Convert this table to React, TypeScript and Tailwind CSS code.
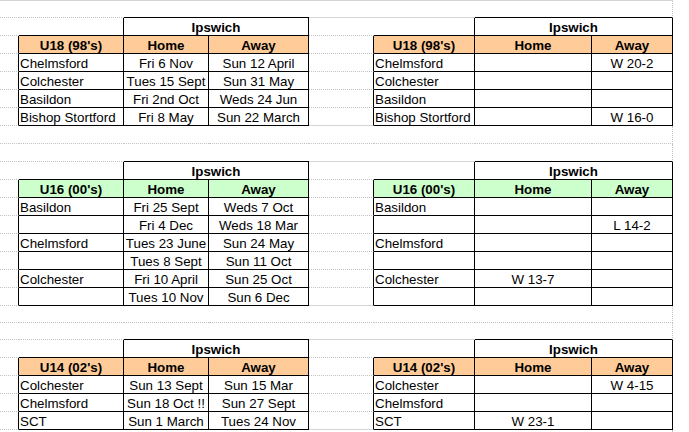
import React from 'react';

type Edge = 'dot' | 'gray' | 'black' | 'none';

type Cell = {
  w: string;
  b: Edge;
  r: Edge;
  t?: string;
  bg?: string;
  bold?: boolean;
  center?: boolean;
};

type Row = { h: string; cells: Cell[] };

const bottomCls: Record<Edge, string> = {
  dot: 'border-b border-b-[#c2c2c2] [border-bottom-style:dotted]!',
  gray: 'border-b border-b-[#d4d4d4]',
  black: 'border-b border-b-black',
  none: '',
};

const rightCls: Record<Edge, string> = {
  dot: 'border-r border-r-[#c2c2c2] [border-right-style:dotted]!',
  gray: 'border-r border-r-[#d4d4d4]',
  black: 'border-r border-r-black',
  none: '',
};

const A = 'w-[19px]';
const B = 'w-[105px]';
const C = 'w-[85px]';
const D = 'w-[100px]';
const E = 'w-[65px]';
const F = 'w-[101px]';
const G = 'w-[117px]';
const H = 'w-[81px]';

const blankRow = (h: string): Row => ({
  h,
  cells: [A, B, C, D, E, F, G].map((w) => ({ w, b: 'dot' as Edge, r: 'none' as Edge })).concat([{ w: H, b: 'dot', r: 'dot' }]),
});

const preRow = (h: string): Row => ({
  h,
  cells: [
    { w: A, b: 'dot', r: 'none' },
    { w: B, b: 'dot', r: 'none' },
    { w: C, b: 'black', r: 'none' },
    { w: D, b: 'black', r: 'none' },
    { w: E, b: 'gray', r: 'none' },
    { w: F, b: 'gray', r: 'none' },
    { w: G, b: 'black', r: 'none' },
    { w: H, b: 'black', r: 'dot' },
  ],
});

const titleRow = (): Row => ({
  h: 'h-[18px]',
  cells: [
    { w: A, b: 'dot', r: 'none' },
    { w: B, b: 'black', r: 'black' },
    { w: 'w-[185px]', b: 'black', r: 'black', t: 'Ipswich', bold: true, center: true },
    { w: E, b: 'dot', r: 'none' },
    { w: F, b: 'black', r: 'black' },
    { w: 'w-[198px]', b: 'black', r: 'black', t: 'Ipswich', bold: true, center: true },
  ],
});

const headRow = (label: string, bg: string): Row => ({
  h: 'h-[18px]',
  cells: [
    { w: A, b: 'dot', r: 'black' },
    { w: B, b: 'black', r: 'black', t: label, bg, bold: true, center: true },
    { w: C, b: 'black', r: 'black', t: 'Home', bg, bold: true, center: true },
    { w: D, b: 'black', r: 'black', t: 'Away', bg, bold: true, center: true },
    { w: E, b: 'dot', r: 'black' },
    { w: F, b: 'black', r: 'black', t: label, bg, bold: true, center: true },
    { w: G, b: 'black', r: 'black', t: 'Home', bg, bold: true, center: true },
    { w: H, b: 'black', r: 'black', t: 'Away', bg, bold: true, center: true },
  ],
});

const dataRow = (l: string[], r: string[], last: boolean): Row => ({
  h: 'h-[18px]',
  cells: [
    { w: A, b: 'dot', r: 'black' },
    { w: B, b: 'black', r: 'black', t: l[0] },
    { w: C, b: 'black', r: 'black', t: l[1], center: true },
    { w: D, b: 'black', r: 'black', t: l[2], center: true },
    { w: E, b: last ? 'gray' : 'dot', r: 'black' },
    { w: F, b: 'black', r: 'black', t: r[0] },
    { w: G, b: 'black', r: 'black', t: r[1], center: true },
    { w: H, b: 'black', r: 'black', t: r[2], center: true },
  ],
});

const sections = [
  {
    label: "U18 (98's)",
    bg: 'bg-[#ffcc99]',
    fixtures: [
      ['Chelmsford', 'Fri 6 Nov', 'Sun 12 April'],
      ['Colchester', 'Tues 15 Sept', 'Sun 31 May'],
      ['Basildon', 'Fri 2nd Oct', 'Weds 24 Jun'],
      ['Bishop Stortford', 'Fri 8 May', 'Sun 22 March'],
    ],
    results: [
      ['Chelmsford', '', 'W 20-2'],
      ['Colchester', '', ''],
      ['Basildon', '', ''],
      ['Bishop Stortford', '', 'W 16-0'],
    ],
  },
  {
    label: "U16 (00's)",
    bg: 'bg-[#ccffcc]',
    fixtures: [
      ['Basildon', 'Fri 25 Sept', 'Weds 7 Oct'],
      ['', 'Fri 4 Dec', 'Weds 18 Mar'],
      ['Chelmsford', 'Tues 23 June', 'Sun 24 May'],
      ['', 'Tues 8 Sept', 'Sun 11 Oct'],
      ['Colchester', 'Fri 10 April', 'Sun 25 Oct'],
      ['', 'Tues 10 Nov', 'Sun 6 Dec'],
    ],
    results: [
      ['Basildon', '', ''],
      ['', '', 'L 14-2'],
      ['Chelmsford', '', ''],
      ['', '', ''],
      ['Colchester', 'W 13-7', ''],
      ['', '', ''],
    ],
  },
  {
    label: "U14 (02's)",
    bg: 'bg-[#ffcc99]',
    fixtures: [
      ['Colchester', 'Sun 13 Sept', 'Sun 15 Mar'],
      ['Chelmsford', 'Sun 18 Oct !!', 'Sun 27 Sept'],
      ['SCT', 'Sun 1 March', 'Tues 24 Nov'],
    ],
    results: [
      ['Colchester', '', 'W 4-15'],
      ['Chelmsford', '', ''],
      ['SCT', 'W 23-1', ''],
    ],
  },
];

// spacer rows before each block (the last one sits right above the "Ipswich" row)
const gaps = [
  ['h-[17px]'],
  ['h-[18px]', 'h-[18px]'],
  ['h-[17px]', 'h-[17px]'],
];

const rows: Row[] = [];
sections.forEach((s, i) => {
  const g = gaps[i];
  g.slice(0, -1).forEach((h) => rows.push(blankRow(h)));
  rows.push(preRow(g[g.length - 1]));
  rows.push(titleRow());
  rows.push(headRow(s.label, s.bg));
  s.fixtures.forEach((f, j) => rows.push(dataRow(f, s.results[j], j === s.fixtures.length - 1)));
});
rows.push(blankRow('h-[18px]'));

const App = () => {
  return (
    <div className="w-[689px] h-[432px] overflow-hidden bg-white text-black font-['Liberation_Sans',Arial,sans-serif] text-[13.33px] leading-[15px]">
      <div className="w-[673px] border-t border-[#d4d4d4]">
        {rows.map((row, i) => (
          <div key={i} className={`flex ${row.h}`}>
            {row.cells.map((c, j) => (
              <div
                key={j}
                className={`shrink-0 flex items-end whitespace-nowrap overflow-hidden ${c.w} ${bottomCls[c.b]} ${rightCls[c.r]} ${c.bg ?? ''} ${c.center ? 'justify-center' : 'pl-[1px]'} ${c.bold ? 'font-bold' : ''}`}
              >
                {c.t}
              </div>
            ))}
          </div>
        ))}
      </div>
    </div>
  );
};

export default App;
